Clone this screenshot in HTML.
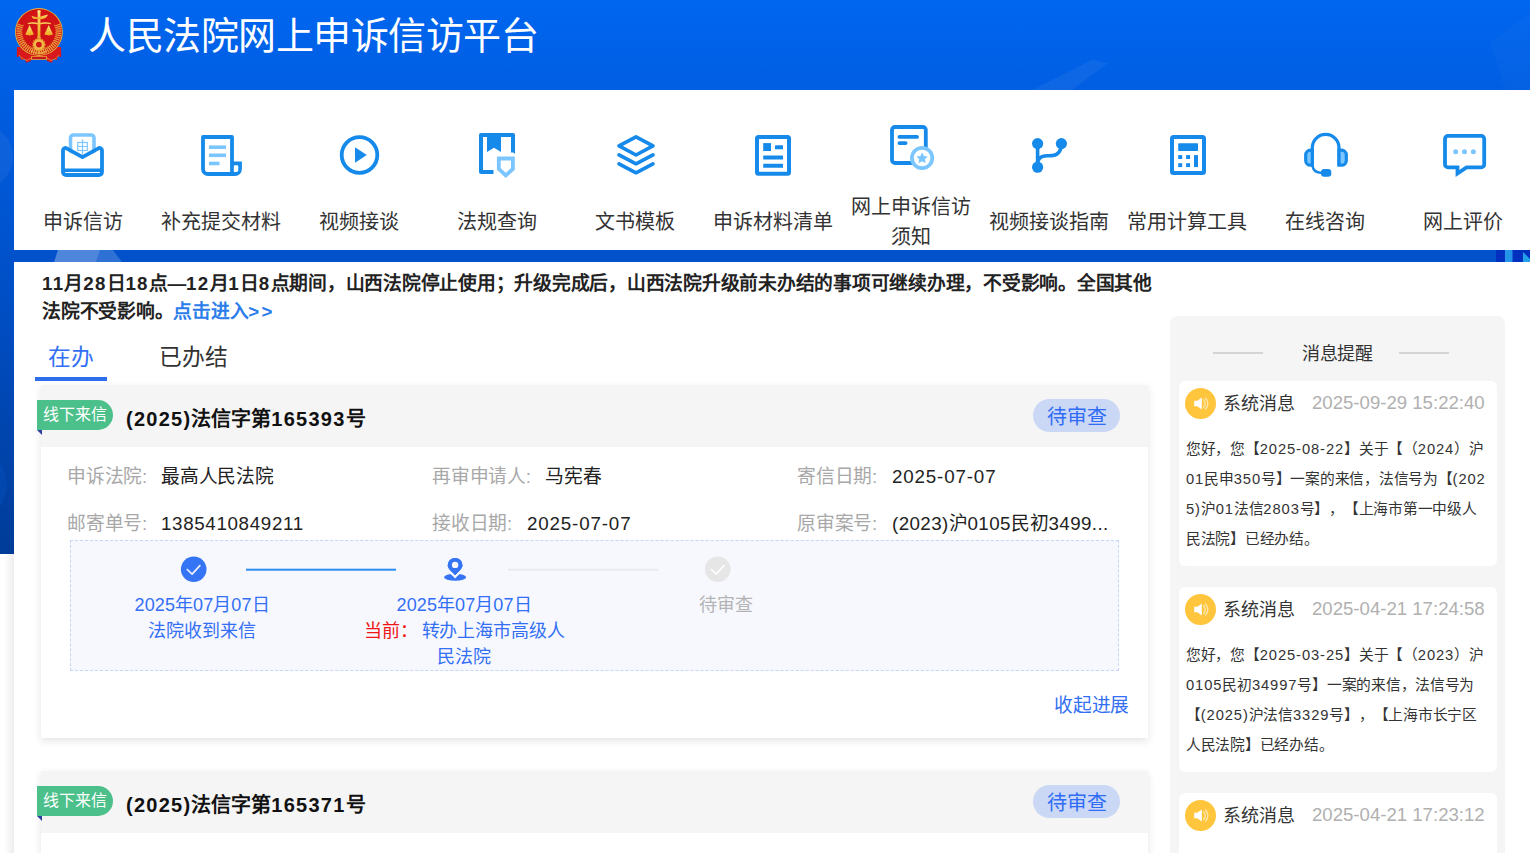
<!DOCTYPE html>
<html lang="zh-CN">
<head>
<meta charset="utf-8">
<title>人民法院网上申诉信访平台</title>
<style>
*{box-sizing:border-box;margin:0;padding:0}
html,body{width:1530px;height:853px;overflow:hidden;background:#fff}
body{font-family:"Liberation Sans",sans-serif;color:#222;position:relative;text-spacing-trim:space-all}
.abs{position:absolute}
#bg{left:0;top:0;width:1530px;height:554px;background:linear-gradient(180deg,#0066f0 0px,#005ee2 90px,#0052cc 250px,#004cc0 330px,#003c98 554px)}
#title{left:88px;top:9px;height:54px;line-height:54px;font-size:38px;letter-spacing:-.48px;color:#fff;white-space:nowrap}
#nav{left:14px;top:90px;width:1516px;height:160px;background:#fff}
.ni{position:absolute;top:0;width:138px;height:160px}
.ni .lb{position:absolute;left:-10px;width:158px;text-align:center;font-size:20px;letter-spacing:.1px;line-height:30px;color:#333;white-space:nowrap}
#main{left:14px;top:262px;width:1516px;height:591px;background:#fff}
#notice{left:42px;top:270px;width:1135px;font-size:18.76px;letter-spacing:-.25px;line-height:28px;font-weight:bold;color:#222;white-space:nowrap}
#notice a{color:#2b7de9;text-decoration:none}
#notice .n{letter-spacing:1.3px}
.tab{font-size:22.78px;letter-spacing:-.2px;line-height:30px;white-space:nowrap}
#tabline{left:35px;top:377px;width:72px;height:4px;background:#2d6fea}
.card{left:41px;width:1107px;background:#fff;box-shadow:0 3px 8px rgba(0,0,0,.11)}
.chead{position:absolute;left:0;top:0;width:100%;height:62px;background:#f5f5f5}
.tag{position:absolute;left:-4px;top:15px;width:76px;height:30px;background:#4cc08a;color:#fff;font-size:16px;line-height:30px;padding-left:6px;border-radius:0 15px 15px 0;white-space:nowrap}
.fold{position:absolute;left:-4px;top:45px;width:0;height:0;border-top:5px solid #2b3f9e;border-left:5px solid transparent}
.ctitle{position:absolute;left:85px;top:19px;font-size:20px;line-height:30px;font-weight:bold;color:#111;white-space:nowrap}
.ctitle .n{letter-spacing:1.25px}
.pill{position:absolute;left:992px;top:14px;width:87px;height:33px;border-radius:17px;background:#cad8f5;color:#306cf5;font-size:20px;line-height:30px;padding-top:3px;text-align:center}
.f{position:absolute;font-size:18.76px;letter-spacing:-.24px;line-height:28px;white-space:nowrap}
.fl{color:#a8a8a8}
.fv{color:#222}
.fv .n{letter-spacing:.42px}.fv .m{letter-spacing:.66px}.fv .dt{letter-spacing:.85px}
.prog{position:absolute;left:29px;top:155px;width:1049px;height:131px;background:#f7f8fe;border:1px dashed #c6d6f6}
.st{position:absolute;font-size:18px;letter-spacing:-.13px;line-height:26px;text-align:center;white-space:nowrap}
.st .n{letter-spacing:.15px}
#side{left:1170px;top:316px;width:335px;height:560px;background:#f5f5f5;border-radius:8px}
.msg{position:absolute;left:9px;width:318px;background:#fff;border-radius:6px}
.mb{position:absolute;left:7px;top:53px;font-size:14.74px;letter-spacing:-.26px;line-height:30px;color:#333;white-space:nowrap}
.mb .n{letter-spacing:.9px}
</style>
</head>
<body>
<div id="bg" class="abs"></div>
<svg class="abs" style="left:0;top:0" width="1530" height="560" viewBox="0 0 1530 560">
<polygon points="1032,90 1092,60 1108,63 1072,90" fill="#fff" opacity=".055"/><polygon points="1490,42 1530,13 1530,90 1505,90" fill="#fff" opacity=".02"/><polygon points="58,250 100,250 96,262 54,262" fill="#fff" opacity=".3"/>
<polygon points="100,250 113,250 122,262 96,262" fill="#fff" opacity=".18"/>
<rect x="1496" y="250" width="34" height="12" fill="#0030c0"/>
<rect x="1505" y="250" width="7.5" height="12" fill="#2494e8"/>
<polygon points="1523,252 1530,259 1530,262 1523,262" fill="#24a0e6"/>
<circle cx="-30" cy="485" r="37" fill="#0a5fd0" opacity=".22"/><circle cx="-20" cy="157" r="33" fill="#fff" opacity=".05"/>
</svg>
<svg class="abs" style="left:9px;top:3px" width="60" height="65" viewBox="9 3 60 65">
<defs>
<radialGradient id="lgr" cx="50%" cy="40%" r="60%"><stop offset="0" stop-color="#e01a1a"/><stop offset="1" stop-color="#c80f12"/></radialGradient>
<linearGradient id="lgg" x1="0" y1="0" x2="0" y2="1"><stop offset="0" stop-color="#ffe27a"/><stop offset="1" stop-color="#f0a81e"/></linearGradient>
</defs>
<!-- ribbon -->
<path d="M17 47 L16.800 57 L20 56.200 L21 60 L25 59 L26 62.800 L31 61 L31.500 57 L46.500 57 L47 61 L52 62.800 L53 59 L57 60 L58 56.200 L61.200 57 L61 47 Z" fill="#d8181c"/>
<path d="M19 55 L22 58.500 L27 60.500 L31 58 M59 55 L56 58.500 L51 60.500 L47 58" stroke="#f4b040" stroke-width=".8" fill="none" opacity=".8"/>
<rect x="31" y="56.200" width="16" height="3.600" fill="#e8a030"/>
<rect x="32" y="57" width="14" height="2" fill="#c8161a"/>
<!-- disc -->
<circle cx="38.900" cy="32" r="23.900" fill="#e6b03a"/>
<circle cx="38.900" cy="32" r="23" fill="url(#lgr)"/>
<!-- wreath -->
<path d="M38.900 52 A20 20 0 0 1 20.300 24.500" stroke="#efb645" stroke-width="5" fill="none" stroke-dasharray="1.300 .8" opacity=".85"/>
<path d="M38.900 52 A20 20 0 0 0 57.500 24.500" stroke="#efb645" stroke-width="5" fill="none" stroke-dasharray="1.300 .8" opacity=".85"/>
<path d="M38.900 49.500 A17.500 17.500 0 0 1 23.500 24" stroke="#e9a83a" stroke-width="1.600" fill="none" stroke-dasharray="1.200 1" opacity=".8"/>
<path d="M38.900 49.500 A17.500 17.500 0 0 0 54.300 24" stroke="#e9a83a" stroke-width="1.600" fill="none" stroke-dasharray="1.200 1" opacity=".8"/>
<!-- inner shield darker red -->
<path d="M25.500 22 Q38.900 14 52.300 22 Q56 33 47 43 L38.900 49 L30.800 43 Q21.800 33 25.500 22 Z" fill="#cf1216" opacity=".9"/>
<!-- huabiao + scales -->
<rect x="37.600" y="10.500" width="2.800" height="26" fill="url(#lgg)"/>
<path d="M31.500 15.800 Q38 18.600 41 16.600 Q45.500 14.800 48 14.500 Q46.500 18.500 41.500 19.300 L33 18.800 Z" fill="url(#lgg)"/>
<circle cx="39" cy="11.500" r="1.500" fill="#ffe27a"/>
<path d="M27.700 23 Q33 21.600 39 23.300 Q45 21.600 50.900 23 L50.900 24.200 Q45 23.200 39 24.800 Q33 23.200 27.700 24.200 Z" fill="url(#lgg)"/>
<path d="M29.600 25 L33.900 34.600 Q29.600 36.200 25.300 34.600 Z" fill="url(#lgg)"/>
<path d="M48.700 25 L53 34.600 Q48.700 36.200 44.400 34.600 Z" fill="url(#lgg)"/>
<!-- gear -->
<circle cx="38.900" cy="44.600" r="5.800" fill="#eeb040" stroke="#e8a030" stroke-width="1.600" stroke-dasharray="1.300 1"/>
<circle cx="38.900" cy="44.600" r="4.500" fill="#f3bd4c"/>
<circle cx="38.900" cy="44.600" r="2.900" fill="#d01418"/>
<circle cx="38.900" cy="37.300" r="1.700" fill="#e8a838"/>
<path d="M31 51 Q38.900 55.500 46.800 51" stroke="#efb645" stroke-width="1.600" fill="none" stroke-dasharray="1.500 .8"/>
</svg>

<div id="title" class="abs">人民法院网上申诉信访平台</div>
<div id="nav" class="abs"><div class="ni" style="left:0px"><div class="lb" style="top:117px">申诉信访</div></div><div class="ni" style="left:138px"><div class="lb" style="top:117px">补充提交材料</div></div><div class="ni" style="left:276px"><div class="lb" style="top:117px">视频接谈</div></div><div class="ni" style="left:414px"><div class="lb" style="top:117px">法规查询</div></div><div class="ni" style="left:552px"><div class="lb" style="top:117px">文书模板</div></div><div class="ni" style="left:690px"><div class="lb" style="top:117px">申诉材料清单</div></div><div class="ni" style="left:828px"><div class="lb" style="top:102px">网上申诉信访<br>须知</div></div><div class="ni" style="left:966px"><div class="lb" style="top:117px">视频接谈指南</div></div><div class="ni" style="left:1104px"><div class="lb" style="top:117px">常用计算工具</div></div><div class="ni" style="left:1242px"><div class="lb" style="top:117px">在线咨询</div></div><div class="ni" style="left:1380px"><div class="lb" style="top:117px">网上评价</div></div></div>

<svg id="icons" class="abs" style="left:0;top:0" width="1530" height="260" viewBox="0 0 1530 260" fill="none">
<!-- 1 envelope -->
<g>
<rect x="70.5" y="135" width="23.5" height="26" rx="3" stroke="#7cc6ff" stroke-width="3.6" fill="#fff"/>
<g stroke="#7cc6ff" stroke-width="1.2"><rect x="77.7" y="142.5" width="9.6" height="8"/><path d="M77.7 146.5h9.6M82.5 139.5v15"/></g>
<path d="M63 149 L82.5 159 L102 149 V172 a3 3 0 0 1 -3 3 H66 a3 3 0 0 1 -3 -3 Z" fill="#fff"/>
<path d="M63 150.5 a2.5 2.5 0 0 1 3.6 -2.2 L82.5 157.2 L98.4 148.3 a2.5 2.5 0 0 1 3.6 2.2 V172 a3 3 0 0 1 -3 3 H66 a3 3 0 0 1 -3 -3 Z" stroke="#168aea" stroke-width="3.8" stroke-linejoin="round"/>
<path d="M63 170.3 H102" stroke="#168aea" stroke-width="3.6"/>
</g>
<!-- 2 doc scroll -->
<g>
<path d="M203 137 H232 V174 H208 a5 5 0 0 1 -5 -5 Z" stroke="#168aea" stroke-width="3.8" stroke-linejoin="round"/>
<path d="M232 163.5 H240 V169 a5 5 0 0 1 -5 5 H228" stroke="#168aea" stroke-width="3.8"/>
<rect x="233.9" y="165.6" width="4.3" height="6" rx="1.2" fill="#fff"/>
<g fill="#7cc6ff"><rect x="209" y="145.4" width="17" height="3.6"/><rect x="209" y="153.5" width="17" height="3.6"/><rect x="209" y="161.7" width="10.5" height="3.6"/></g>
</g>
<!-- 3 play -->
<g>
<circle cx="359.5" cy="155" r="17.8" stroke="#168aea" stroke-width="3.8"/>
<path d="M355 147.2 L366.8 154.9 L355 162.7 Z" fill="#168aea"/>
</g>
<!-- 4 book shield -->
<g>
<path d="M513 152.6 V135 H481 V172 H493.5" stroke="#168aea" stroke-width="4" stroke-linejoin="round"/>
<path d="M511 150 L515 154 V150 Z" fill="#168aea"/>
<path d="M487 135 H501 V152 L494 147.8 L487 152 Z" fill="#168aea"/>
<path d="M498.8 158.5 H512.9 V169 L505.8 175.4 L498.8 169 Z" stroke="#7cc6ff" stroke-width="3.8" fill="#fff"/>
</g>
<!-- 5 layers -->
<g stroke="#168aea" stroke-width="3.6" stroke-linejoin="round" stroke-linecap="round">
<path d="M636 136.8 L653 145.8 L636 155 L619 145.8 Z"/>
<path d="M619 154.8 L636 163.8 L653 154.8"/>
<path d="M619 163.8 L636 172.8 L653 163.8"/>
</g>
<!-- 6 list doc -->
<g>
<rect x="757" y="137" width="32" height="36.8" rx="1.5" stroke="#168aea" stroke-width="4"/>
<g fill="#168aea"><rect x="763.2" y="143.1" width="7.8" height="7.9"/><rect x="775" y="145.3" width="8" height="4" rx=".6"/><rect x="763.2" y="155.6" width="19.8" height="4" rx=".6"/><rect x="763.2" y="163.8" width="19.8" height="4" rx=".6"/></g>
</g>
<!-- 7 doc star -->
<g>
<rect x="892" y="127" width="33.8" height="36" rx="3" stroke="#168aea" stroke-width="3.8"/>
<path d="M899.5 136.9 H917 M899.5 143.1 H905.6" stroke="#168aea" stroke-width="3.9" stroke-linecap="round"/>
<circle cx="922.1" cy="158" r="10.2" stroke="#7cc6ff" stroke-width="3.7" fill="#fff"/>
<path d="M922.1 152.3 l1.75 3.6 3.95 .55 -2.85 2.8 .68 3.95 -3.53 -1.87 -3.53 1.87 .68 -3.95 -2.85 -2.8 3.95 -.55 Z" fill="#7cc6ff"/>
</g>
<!-- 8 branch -->
<g>
<path d="M1037.6 143.6 V167.2 M1061.4 143.6 C1061.4 156.5 1052 155.8 1047 155.8 C1040.5 155.8 1037.6 159 1037.6 164" stroke="#168aea" stroke-width="3.6"/>
<circle cx="1037.6" cy="143.6" r="5.6" fill="#168aea"/><circle cx="1061.4" cy="143.6" r="5.6" fill="#168aea"/><circle cx="1037.6" cy="167.2" r="5.6" fill="#168aea"/>
</g>
<!-- 9 calc -->
<g>
<rect x="1172" y="137" width="32" height="36" rx="1.5" stroke="#168aea" stroke-width="4"/>
<g fill="#168aea"><rect x="1178.2" y="143.3" width="19.8" height="7.6" rx=".6"/>
<rect x="1178.2" y="155.1" width="4" height="3.9"/><rect x="1186.1" y="155.1" width="4" height="3.9"/>
<rect x="1178.2" y="163.2" width="4" height="3.9"/><rect x="1186.1" y="163.2" width="4" height="3.9"/>
<rect x="1194" y="155.1" width="4" height="12"/></g>
</g>
<!-- 10 headset -->
<g>
<path d="M1312.3 166 V147.8 a13.35 13.35 0 0 1 26.7 0 V166" stroke="#168aea" stroke-width="3.2"/>
<path d="M1312.3 150.2 H1310.5 a4.8 4.8 0 0 0 -4.8 4.8 V160.4 a4.8 4.8 0 0 0 4.8 4.8 H1312.3 Z" fill="#7cc6ff" stroke="#168aea" stroke-width="3.2"/>
<path d="M1339 150.2 H1341.5 a4.8 4.8 0 0 1 4.8 4.8 V160.4 a4.8 4.8 0 0 1 -4.8 4.8 H1339 Z" fill="#7cc6ff" stroke="#168aea" stroke-width="3.2"/>
<path d="M1312.6 165 C1312.6 171 1317 173 1323 173" stroke="#168aea" stroke-width="2.4"/>
<rect x="1321" y="169" width="10.3" height="7.7" rx="3.2" fill="#168aea"/>
</g>
<!-- 11 chat -->
<g>
<path d="M1448 135.9 H1481.2 a3 3 0 0 1 3 3 V164.4 a3 3 0 0 1 -3 3 H1466.5 L1457.5 173.5 V167.4 H1448 a3 3 0 0 1 -3 -3 V138.9 a3 3 0 0 1 3 -3 Z" stroke="#168aea" stroke-width="3.8" stroke-linejoin="miter"/>
<g fill="#7cc6ff"><circle cx="1455.7" cy="151.7" r="2.5"/><circle cx="1464.5" cy="151.7" r="2.5"/><circle cx="1473.4" cy="151.7" r="2.5"/></g>
</g>
</svg>

<div id="main" class="abs"></div><div class="abs" style="left:4px;top:554px;width:10px;height:299px;background:linear-gradient(to left,rgba(0,0,0,.07),rgba(0,0,0,0))"></div>
<div id="notice" class="abs"><span class="n">11</span>月<span class="n">28</span>日<span class="n">18</span>点—<span class="n">12</span>月<span class="n">1</span>日<span class="n">8</span>点期间，山西法院停止使用；升级完成后，山西法院升级前未办结的事项可继续办理，不受影响。全国其他<br>法院不受影响。<a>点击进入<span style="letter-spacing:2.2px">&gt;&gt;</span></a></div>
<div class="abs tab" style="left:48px;top:342px;color:#336ff5">在办</div>
<div class="abs tab" style="left:159px;top:342px;color:#333">已办结</div>
<div id="tabline" class="abs"></div>
<div class="abs card" style="top:385px;height:353px"><div class="chead"></div><div class="tag">线下来信</div><div class="fold"></div><div class="ctitle"><span class="n">(2025)</span>法信字第<span class="n">165393</span>号</div><div class="pill">待审查</div><div class="f fl" style="left:26px;top:78px">申诉法院:</div><div class="f fv" style="left:120px;top:78px">最高人民法院</div><div class="f fl" style="left:391px;top:78px">再审申请人:</div><div class="f fv" style="left:504px;top:78px">马宪春</div><div class="f fl" style="left:756px;top:78px">寄信日期:</div><div class="f fv" style="left:851px;top:78px"><span class="dt">2025-07-07</span></div><div class="f fl" style="left:26px;top:125px">邮寄单号:</div><div class="f fv" style="left:120px;top:125px"><span class="m">1385410849211</span></div><div class="f fl" style="left:391px;top:125px">接收日期:</div><div class="f fv" style="left:486px;top:125px"><span class="dt">2025-07-07</span></div><div class="f fl" style="left:756px;top:125px">原审案号:</div><div class="f fv" style="left:851px;top:125px"><span class="n">(2023)</span>沪<span class="n">0105</span>民初<span class="n">3499...</span></div><div class="prog">
  <svg class="abs" style="left:-1px;top:-1px" width="1049" height="130" viewBox="0 0 1049 130" fill="none">
   <circle cx="123.700" cy="29.300" r="12.800" fill="#3574f4"/><path d="M117.300 29.500 l4.800 4.600 7.800 -8.400" stroke="#fff" stroke-width="1.700" stroke-linecap="round" stroke-linejoin="round" opacity=".9"/>
   <rect x="176" y="28.700" width="150" height="2" fill="#2d8cf0"/>
   <ellipse cx="385.100" cy="37.200" rx="11.100" ry="3.500" fill="#3574f4"/>
   <path d="M385.100 36.700 C 380 31.500 376.400 29.500 376.400 25.300 a8.700 8.700 0 0 1 17.400 0 C 393.800 29.500 390.200 31.500 385.100 36.700 Z" fill="#3574f4" stroke="#f7f8fe" stroke-width="2.600"/>
   <path d="M385.100 35.200 C 380.500 30.500 377.700 28.800 377.700 25.300 a7.400 7.400 0 0 1 14.800 0 C 392.500 28.800 389.700 30.500 385.100 35.200 Z" fill="#3574f4"/>
   <circle cx="385.100" cy="24.900" r="3.200" fill="#f7f8fe"/>
   <rect x="438" y="28.700" width="150" height="2" fill="#e8eaee"/>
   <circle cx="647.700" cy="29.300" r="12.800" fill="#e6e6e6"/><path d="M641.300 29.500 l4.800 4.600 7.800 -8.400" stroke="#fff" stroke-width="1.700" stroke-linecap="round" stroke-linejoin="round" opacity=".9"/>
  </svg>
  <div class="st" style="left:31px;width:200px;top:51px;color:#336ff5"><span class="n">2025</span>年<span class="n">07</span>月<span class="n">07</span>日<br>法院收到来信</div>
  <div class="st" style="left:293px;width:200px;top:51px;color:#336ff5"><span class="n">2025</span>年<span class="n">07</span>月<span class="n">07</span>日<br><span style="color:#f01414">当前：</span><span style="margin-left:4px">转办上海市高级人</span><br>民法院</div>
  <div class="st" style="left:555px;width:200px;top:51px;color:#b4b4b4">待审查</div>
 </div>
 <div class="f" style="left:1013px;top:307px;color:#336ff5">收起进展</div></div>
<div class="abs card" style="top:771px;height:120px"><div class="chead"></div><div class="tag">线下来信</div><div class="fold"></div><div class="ctitle"><span class="n">(2025)</span>法信字第<span class="n">165371</span>号</div><div class="pill">待审查</div></div>
<div id="side" class="abs">
 <div class="abs" style="left:43px;top:36px;width:50px;height:2px;background:#d4d4d4"></div>
 <div class="abs" style="left:229px;top:36px;width:50px;height:2px;background:#d4d4d4"></div>
 <div class="abs" style="left:0;width:335px;top:24px;text-align:center;font-size:18px;letter-spacing:-.13px;line-height:28px;color:#333">消息提醒</div>
 <div class="msg" style="top:65px;height:185px"><svg class="abs" style="left:6px;top:7px" width="31" height="31" viewBox="0 0 31 31"><circle cx="15.500" cy="15.500" r="15.500" fill="#ffc53d"/><path d="M9.200 12.700 h3.200 l4.400 -3.300 v12.200 l-4.400 -3.300 h-3.200 Z" fill="#fff"/><path d="M18.600 11.800 a5 5 0 0 1 0 7.400 M20.500 10 a7.600 7.600 0 0 1 0 11" stroke="#fff" stroke-width="1.300" fill="none" stroke-linecap="round" opacity=".6"/></svg><div class="abs" style="left:44px;top:9px;font-size:18px;letter-spacing:-.13px;line-height:28px;color:#333;white-space:nowrap">系统消息</div><div class="abs" style="left:133px;top:8px;font-size:18.6px;line-height:28px;color:#b0b0b0;white-space:nowrap">2025-09-29 15:22:40</div><div class="mb">您好，您【<span class="n">2025-08-22</span>】关于【（<span class="n">2024</span>）沪<br><span class="n">01</span>民申<span class="n">350</span>号】一案的来信，法信号为【<span class="n">(202</span><br><span class="n">5)</span>沪<span class="n">01</span>法信<span class="n">2803</span>号】，【上海市第一中级人<br>民法院】已经办结。</div></div><div class="msg" style="top:271px;height:185px"><svg class="abs" style="left:6px;top:7px" width="31" height="31" viewBox="0 0 31 31"><circle cx="15.500" cy="15.500" r="15.500" fill="#ffc53d"/><path d="M9.200 12.700 h3.200 l4.400 -3.300 v12.200 l-4.400 -3.300 h-3.200 Z" fill="#fff"/><path d="M18.600 11.800 a5 5 0 0 1 0 7.400 M20.500 10 a7.600 7.600 0 0 1 0 11" stroke="#fff" stroke-width="1.300" fill="none" stroke-linecap="round" opacity=".6"/></svg><div class="abs" style="left:44px;top:9px;font-size:18px;letter-spacing:-.13px;line-height:28px;color:#333;white-space:nowrap">系统消息</div><div class="abs" style="left:133px;top:8px;font-size:18.6px;line-height:28px;color:#b0b0b0;white-space:nowrap">2025-04-21 17:24:58</div><div class="mb">您好，您【<span class="n">2025-03-25</span>】关于【（<span class="n">2023</span>）沪<br><span class="n">0105</span>民初<span class="n">34997</span>号】一案的来信，法信号为<br>【<span class="n">(2025)</span>沪法信<span class="n">3329</span>号】，【上海市长宁区<br>人民法院】已经办结。</div></div><div class="msg" style="top:477px;height:185px"><svg class="abs" style="left:6px;top:7px" width="31" height="31" viewBox="0 0 31 31"><circle cx="15.500" cy="15.500" r="15.500" fill="#ffc53d"/><path d="M9.200 12.700 h3.200 l4.400 -3.300 v12.200 l-4.400 -3.300 h-3.200 Z" fill="#fff"/><path d="M18.600 11.800 a5 5 0 0 1 0 7.400 M20.500 10 a7.600 7.600 0 0 1 0 11" stroke="#fff" stroke-width="1.300" fill="none" stroke-linecap="round" opacity=".6"/></svg><div class="abs" style="left:44px;top:9px;font-size:18px;letter-spacing:-.13px;line-height:28px;color:#333;white-space:nowrap">系统消息</div><div class="abs" style="left:133px;top:8px;font-size:18.6px;line-height:28px;color:#b0b0b0;white-space:nowrap">2025-04-21 17:23:12</div></div>
</div>
</body>
</html>
